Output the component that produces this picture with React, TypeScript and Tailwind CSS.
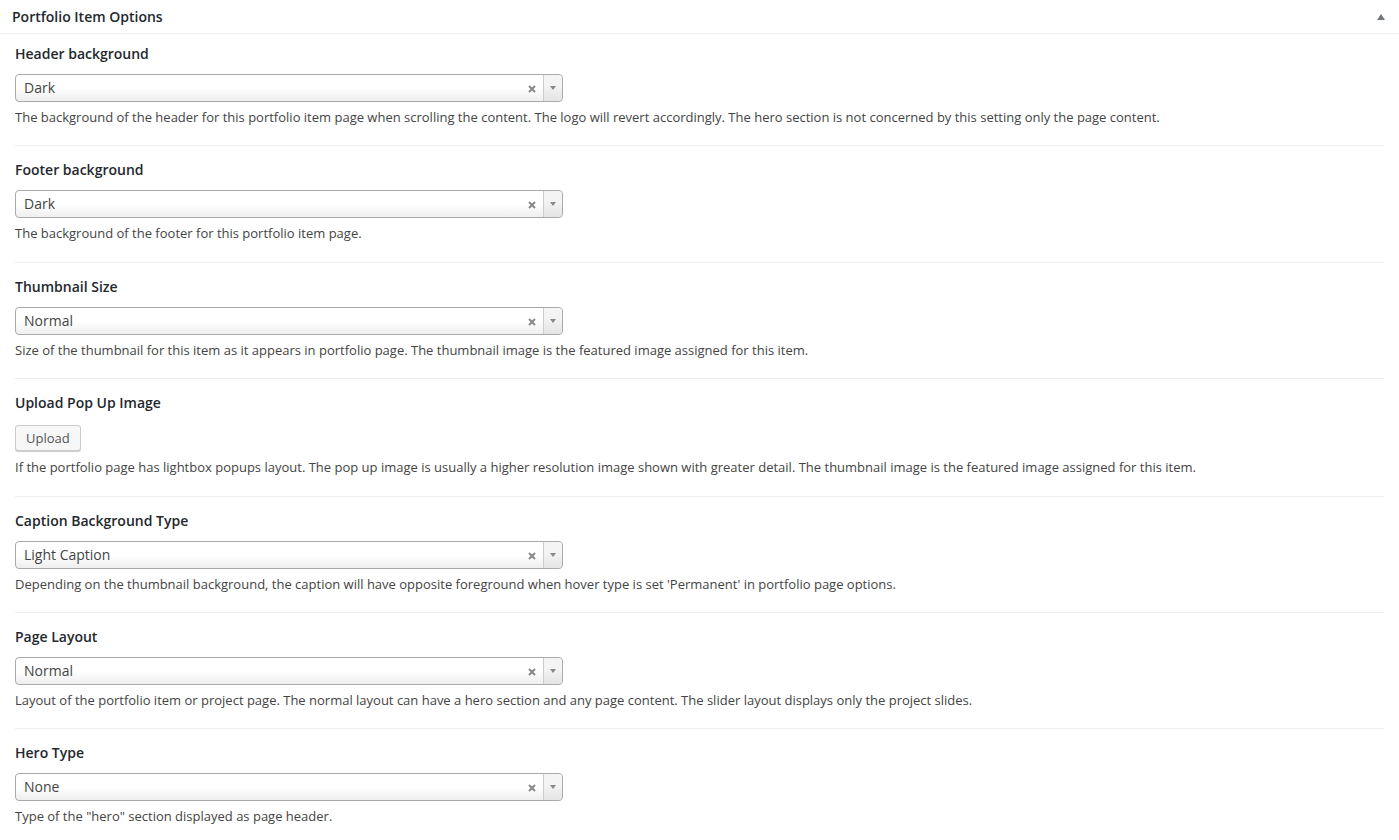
import React from "react";

type Field =
  | { kind: "select"; label: string; value: string; desc: string }
  | { kind: "upload"; label: string; desc: string };

const fields: Field[] = [
  {
    kind: "select",
    label: "Header background",
    value: "Dark",
    desc: "The background of the header for this portfolio item page when scrolling the content. The logo will revert accordingly. The hero section is not concerned by this setting only the page content.",
  },
  {
    kind: "select",
    label: "Footer background",
    value: "Dark",
    desc: "The background of the footer for this portfolio item page.",
  },
  {
    kind: "select",
    label: "Thumbnail Size",
    value: "Normal",
    desc: "Size of the thumbnail for this item as it appears in portfolio page. The thumbnail image is the featured image assigned for this item.",
  },
  {
    kind: "upload",
    label: "Upload Pop Up Image",
    desc: "If the portfolio page has lightbox popups layout. The pop up image is usually a higher resolution image shown with greater detail. The thumbnail image is the featured image assigned for this item.",
  },
  {
    kind: "select",
    label: "Caption Background Type",
    value: "Light Caption",
    desc: "Depending on the thumbnail background, the caption will have opposite foreground when hover type is set 'Permanent' in portfolio page options.",
  },
  {
    kind: "select",
    label: "Page Layout",
    value: "Normal",
    desc: "Layout of the portfolio item or project page. The normal layout can have a hero section and any page content. The slider layout displays only the project slides.",
  },
  {
    kind: "select",
    label: "Hero Type",
    value: "None",
    desc: 'Type of the "hero" section displayed as page header.',
  },
];

function Select({ value }: { value: string }) {
  return (
    <div className="mt-[10px] flex h-[28px] w-[548px] items-stretch rounded-[4px] border border-[#aaa] bg-[linear-gradient(to_top,#eee_0%,#fff_50%)]">
      <div className="flex flex-1 items-center pl-[8px] text-[14px] leading-[26px] text-[#444]">
        {value}
      </div>
      <div className="flex w-[24px] items-center justify-center pl-[1px] pt-[1px]">
        <svg width="8" height="8" viewBox="0 0 8 8">
          <path d="M1 1 L7 7 M7 1 L1 7" stroke="#888" strokeWidth="2" />
        </svg>
      </div>
      <div className="flex w-[19px] items-center justify-center rounded-r-[4px] border-l border-[#ccc] bg-[linear-gradient(to_top,#e4e4e4_0%,#f4f4f4_60%)]">
        <svg width="6" height="4" viewBox="0 0 6 4">
          <path d="M0 0 L6 0 L3 4 Z" fill="#888" />
        </svg>
      </div>
    </div>
  );
}

export default function App() {
  return (
    <div
      className="min-h-[840px] w-full bg-white text-[#444]"
      style={{ fontFamily: '"Open Sans", "Noto Sans", sans-serif' }}
    >
      <div className="flex h-[34px] items-center justify-between border-b border-[#eee] pl-[12px] pr-[14px]">
        <span className="text-[14px] font-semibold leading-[20px] text-[#23282d]">
          Portfolio Item Options
        </span>
        <svg width="8" height="6" viewBox="0 0 8 6">
          <path d="M0 6 L4 0 L8 6 Z" fill="#72777c" />
        </svg>
      </div>
      <div className="px-[15px]">
        {fields.map((f, i) => (
          <div
            key={i}
            className={
              i === 0
                ? "pt-[10px] pb-[18px]"
                : i === 1 || f.kind === "upload"
                ? "border-t border-[#eee] pt-[14px] pb-[19px]"
                : "border-t border-[#eee] pt-[14px] pb-[18px]"
            }
          >
            <div className="text-[14px] font-semibold leading-[20px] text-[#23282d]">
              {f.label}
            </div>
            {f.kind === "select" ? (
              <Select value={f.value} />
            ) : (
              <div className="mt-[12px] flex">
                <button className="h-[26px] rounded-[3px] border border-[#ccc] bg-[#f7f7f7] px-[10px] text-[13px] leading-[24px] text-[#555] shadow-[0_1px_0_#ccc]">
                  Upload
                </button>
              </div>
            )}
            <div
              className={
                f.kind === "upload"
                  ? "mt-[6px] text-[13px] leading-[20px] text-[#444]"
                  : "mt-[5px] text-[13px] leading-[20px] text-[#444]"
              }
            >
              {f.desc}
            </div>
          </div>
        ))}
      </div>
    </div>
  );
}
